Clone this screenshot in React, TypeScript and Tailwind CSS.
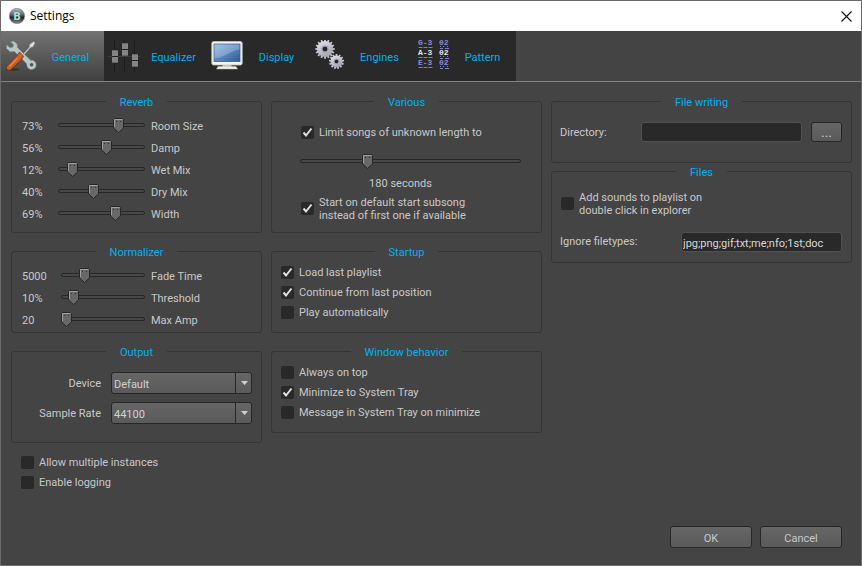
import React, { useId, useState } from 'react';

const ToolsIcon = () => (
  <svg viewBox="0 0 32 32" className="size-8 shrink-0">
    <defs>
      <linearGradient id="handle" x1="0" y1="0" x2="1" y2="1">
        <stop offset="0.2" stopColor="#8c3c10" />
        <stop offset="0.5" stopColor="#d0682a" />
        <stop offset="0.9" stopColor="#7a300a" />
      </linearGradient>
    </defs>
    <ellipse cx="8" cy="29.5" rx="7" ry="1.5" fill="#222" opacity="0.5" />
    <path d="M17 15.500L24.500 7l.2-2.500 4-3 1.300 1.500-2 3.700-2.500.9-7.500 8.500z" fill="#d9e2e2" stroke="#8d9999" strokeWidth="0.6" />
    <path
      d="M5.500 1.800l3.200-.6 3.300 2.600.6 4 13 12.400c3-.4 5.600 1.700 5.600 4.600 0 2.700-2 4.700-4.600 4.700-3 0-5.200-2.600-4.700-5.500L9.500 11.500l-4.300.3L1.500 8.500l.1-3.500 3.600 2.700 2.700-.7.600-2.400z"
      fill="#b9c6c6"
      stroke="#7f8b8b"
      strokeWidth="0.7"
    />
    <circle cx="26.600" cy="24.800" r="2.200" fill="#555" stroke="#e4eaea" strokeWidth="0.600" />
    <path d="M14.500 12l4.200 4.200-2.200 3.600L6 29.500c-1.300 1.200-2.600 1-3.700 0-1.100-1-1.200-2.500-.1-3.700L12 15.500z" fill="url(#handle)" stroke="#6a2a08" strokeWidth="0.6" />
    <path d="M12.500 18L4.500 26.500" stroke="#f0a070" strokeWidth="0.9" />
  </svg>
);

const EqualizerIcon = () => (
  <svg viewBox="0 0 32 32" className="size-8 shrink-0" shapeRendering="crispEdges">
    <path d="M6.500 0v32M16.500 0v32M26.500 0v32" stroke="#1c1c1c" strokeWidth="1" />
    <path d="M0 16.500h32" stroke="#3c3c3c" strokeWidth="1" />
    {[[4, 10], [14, 3], [24, 14]].map(([x, y]) => (
      <g key={x}>
        <rect x={x} y={y} width="6" height="13" fill="#858585" />
        <rect x={x} y={y} width="6" height="1" fill="#6a6a6a" />
        <rect x={x} y={y + 6} width="6" height="1" fill="#222" />
        <rect x={x} y={y + 12} width="6" height="1" fill="#666" />
      </g>
    ))}
  </svg>
);

const DisplayIcon = () => (
  <svg viewBox="0 0 32 32" className="size-8 shrink-0">
    <defs>
      <linearGradient id="screen" x1="0" y1="0" x2="1" y2="1">
        <stop offset="0" stopColor="#8db4e0" />
        <stop offset="1" stopColor="#2b5a9b" />
      </linearGradient>
    </defs>
    <path d="M12 24h8l1 3.500H11z" fill="#c8c8c4" />
    <path d="M7 26.500h18l1.500 2.500h-21z" fill="#f1f1ee" stroke="#b8b8b4" strokeWidth="0.500" />
    <rect x="0.800" y="1.500" width="30.400" height="23.500" rx="1.800" fill="#f4f4f0" stroke="#c4c4be" strokeWidth="0.800" />
    <rect x="3" y="4" width="26" height="17.500" fill="url(#screen)" stroke="#31598f" strokeWidth="0.700" />
    <path d="M3.500 4.500h25v5C19 11 13 18 3.500 18z" fill="#fff" opacity="0.220" />
  </svg>
);

type GearProps = { cx: number; cy: number; r: number; teeth: number };

const Gear = ({ cx, cy, r, teeth }: GearProps) => (
  <g transform={`translate(${cx} ${cy})`}>
    {Array.from({ length: teeth }, (_, i) => (
      <rect key={i} x="-0.900" y={-r} width="1.800" height="3" fill="#c6c6d2" transform={`rotate(${(360 / teeth) * i})`} />
    ))}
    <circle r={r - 1.6} fill="url(#metal)" />
    <circle r={r * 0.360} fill="#9a9aa8" />
    <circle r={r * 0.240} fill="#222" />
  </g>
);

const EnginesIcon = () => (
  <svg viewBox="0 0 32 32" className="size-8 shrink-0">
    <defs>
      <linearGradient id="metal" x1="0" y1="0" x2="0.500" y2="1">
        <stop offset="0" stopColor="#e6e6f0" />
        <stop offset="1" stopColor="#a4a4b4" />
      </linearGradient>
    </defs>
    <Gear cx={11} cy={9} r={9.700} teeth={16} />
    <Gear cx={22.500} cy={21.500} r={7.500} teeth={13} />
  </svg>
);

const patternNotes = ['G-3', 'A-3', 'E-3'];

const PatternIcon = () => (
  <svg viewBox="0 0 32 32" className="size-8 shrink-0 overflow-visible">
    <g fontFamily="'Liberation Mono', monospace" fontSize="8" fontWeight="bold">
      {patternNotes.map((note, i) => (
        <g key={note} fill={i === 1 ? '#e8e8e8' : '#8c88d8'}>
          <text x="1" y={5 + i * 10}>{note}</text>
          <text x="22" y={5 + i * 10}>02</text>
          <path d={`M1.500 ${7.500 + i * 10}h4m1 0h4m1 0h4M23 ${6.500 + i * 10}h1m2 0h1m3 0h1M23 ${8.500 + i * 10}h3m2 0h4`} stroke="#7f7bc4" />
        </g>
      ))}
    </g>
  </svg>
);

const AppIcon = () => (
  <svg viewBox="0 0 16 16" className="size-4">
    <defs>
      <linearGradient id="badge" x1="0" y1="0" x2="0" y2="1">
        <stop offset="0" stopColor="#b5b5b5" />
        <stop offset="0.450" stopColor="#5d5d5d" />
        <stop offset="0.600" stopColor="#242424" />
        <stop offset="1" stopColor="#909090" />
      </linearGradient>
    </defs>
    <circle cx="8" cy="8" r="7.700" fill="url(#badge)" stroke="#777" strokeWidth="0.500" />
    <text x="8" y="11.500" textAnchor="middle" fontSize="10" fontWeight="bold" fontFamily="'DejaVu Sans', sans-serif" fill="#9fe0d6">
      B
    </text>
  </svg>
);

const tabs = [
  { name: 'General', icon: ToolsIcon },
  { name: 'Equalizer', icon: EqualizerIcon },
  { name: 'Display', icon: DisplayIcon },
  { name: 'Engines', icon: EnginesIcon },
  { name: 'Pattern', icon: PatternIcon },
];

type GroupProps = { title: string; className: string; children: React.ReactNode };

const Group = ({ title, className, children }: GroupProps) => (
  <fieldset className="min-w-0 rounded-[3px] border border-[#353535]">
    <legend className="mx-auto px-[14px] pt-0.5 leading-[13px] text-[#00b0f0]">{title}</legend>
    <div className={className}>{children}</div>
  </fieldset>
);

type CheckProps = { label: React.ReactNode; defaultChecked?: boolean };

const Check = ({ label, defaultChecked }: CheckProps) => (
  <label className="flex items-center gap-[5px]">
    <span className="grid shrink-0">
      <input
        type="checkbox"
        defaultChecked={defaultChecked}
        className="peer col-start-1 row-start-1 size-[13px] appearance-none rounded-[2px] bg-[#292929]"
      />
      <svg viewBox="0 0 13 13" className="pointer-events-none col-start-1 row-start-1 hidden size-[13px] peer-checked:block">
        <path d="M2.500 6.500l2.500 3 5.500-7" fill="none" stroke="#e0e0e0" strokeWidth="2" />
      </svg>
    </span>
    <span className="pt-0.5">{label}</span>
  </label>
);

type SliderProps = {
  id: string;
  value: number;
  onChange: (value: number) => void;
  min?: number;
  max?: number;
  label?: string;
};

const Slider = ({ id, value, onChange, min = 0, max = 100, label }: SliderProps) => {
  const ratio = (value - min) / (max - min);

  return (
    <div className="relative flex h-4 min-w-0 flex-1 items-center pb-0.5">
      <div className="h-1 w-full rounded-full border border-[#272727] bg-[#484848]"></div>
      <input
        id={id}
        type="range"
        min={min}
        max={max}
        value={value}
        aria-label={label}
        onChange={(e) => onChange(Number(e.target.value))}
        className="absolute inset-0 w-full opacity-0"
      />
      <svg
        viewBox="0 0 11 15"
        className="pointer-events-none absolute top-0 h-[15px] w-[11px]"
        style={{ left: `calc((100% - 11px) * ${ratio})` }}
      >
        <path d="M1.500 .5h8l1 1V10L5.500 14.500.5 10V1.500z" fill="#686868" stroke="#272727" />
        <path d="M1.500 9V1.500h8" fill="none" stroke="#a0a0a0" />
        <path d="M3 3.500h1M7 3.500h1" stroke="#333" />
      </svg>
    </div>
  );
};

type SliderRowProps = { name: string; initial: number; unit?: string; min?: number; max?: number; wide?: boolean };

const SliderRow = ({ name, initial, unit = '', min, max, wide }: SliderRowProps) => {
  const [value, setValue] = useState(initial);
  const id = useId();

  return (
    <div className="flex h-[22px] items-center">
      <output htmlFor={id} className={wide ? 'w-[39px] pt-0.5' : 'w-9 pt-0.5'}>
        {value}
        {unit}
      </output>
      <Slider id={id} value={value} onChange={setValue} min={min} max={max} />
      <label htmlFor={id} className="w-[116px] pt-0.5 pl-[6px]">
        {name}
      </label>
    </div>
  );
};

type ComboProps = { label: string; options: string[] };

const Combo = ({ label, options }: ComboProps) => {
  const id = useId();

  return (
    <div className="flex items-center gap-[10px]">
      <label htmlFor={id} className="flex-1 pt-0.5 text-right">
        {label}
      </label>
      <div className="grid w-[141px]">
        <select
          id={id}
          className="col-start-1 row-start-1 h-[22px] appearance-none rounded-[3px] border border-[#272727] bg-linear-to-b from-[#666] to-[#5a5a5a] pt-[3px] pl-[2px] text-[#d0d0d0]"
        >
          {options.map((option) => (
            <option key={option}>{option}</option>
          ))}
        </select>
        <span className="pointer-events-none col-start-1 row-start-1 my-px flex w-[17px] items-center justify-center justify-self-end border-l border-[#272727]">
          <svg viewBox="0 0 7 4" className="h-1 w-[7px]">
            <path d="M0 0h7L3.500 4z" fill="#d0d0d0" />
          </svg>
        </span>
      </div>
    </div>
  );
};

const buttonStyle = 'rounded-[3px] border border-[#272727] bg-linear-to-b from-[#666] to-[#5a5a5a] text-[#c8c8c8]';
const fieldStyle = 'h-5 w-[161px] rounded-[3px] border border-[#505050] bg-[#292929] px-px pt-0.5 text-[#d8d8d8]';

const App = () => {
  const [active, setActive] = useState('General');
  const [seconds, setSeconds] = useState(180);

  return (
    <div className="flex min-h-screen flex-col border border-[#6a6a6a] bg-[#444] font-['Roboto',sans-serif] text-[11px] leading-[14px] text-[#c8c8c8]">
      <header className="flex h-[30px] items-center bg-white pr-[9px] pl-2 text-black">
        <AppIcon />
        <h1 className="flex-1 pl-[5px] font-['Open_Sans',sans-serif] text-xs">Settings</h1>
        <button aria-label="Close">
          <svg viewBox="0 0 11 11" className="size-[11px]">
            <path d="M.5 .5l10 10M10.500 .5l-10 10" stroke="#111" strokeWidth="1.100" />
          </svg>
        </button>
      </header>

      {/* Section tabs */}
      <nav role="tablist" className="flex border-b border-[#828282]">
        {tabs.map(({ name, icon: Icon }) => (
          <button
            key={name}
            role="tab"
            aria-selected={name === active}
            onClick={() => setActive(name)}
            className={`flex h-[50px] w-[103px] items-center pl-1 text-[#00b0f0] ${
              name === active ? 'bg-linear-to-b from-[#747474] to-[#404040]' : 'bg-[#292929]'
            }`}
          >
            <Icon />
            <span className="flex-1 pt-1 text-center">{name}</span>
          </button>
        ))}
      </nav>

      <main className="grid grid-cols-[251fr_271fr_301fr] gap-[9px] pt-3 pr-[9px] pl-[10px]">
        <div className="flex flex-col gap-[11px]">
          <Group title="Reverb" className="pt-[6px] pb-[7px] pl-[10px]">
            <SliderRow name="Room Size" initial={73} unit="%" />
            <SliderRow name="Damp" initial={56} unit="%" />
            <SliderRow name="Wet Mix" initial={12} unit="%" />
            <SliderRow name="Dry Mix" initial={40} unit="%" />
            <SliderRow name="Width" initial={69} unit="%" />
          </Group>

          <Group title="Normalizer" className="pt-[6px] pb-px pl-[10px]">
            <SliderRow name="Fade Time" initial={5000} max={20000} wide />
            <SliderRow name="Threshold" initial={10} unit="%" wide />
            <SliderRow name="Max Amp" initial={20} min={20} max={200} wide />
          </Group>

          <Group title="Output" className="pt-[13px] pr-[9px] pb-[18px]">
            <div className="flex flex-col gap-2">
              <Combo label="Device" options={['Default']} />
              <Combo label="Sample Rate" options={['44100', '48000']} />
            </div>
          </Group>

          <div className="flex flex-col gap-1 pl-[10px]">
            <Check label="Allow multiple instances" />
            <Check label="Enable logging" />
          </div>
        </div>

        <div className="flex flex-col gap-[11px]">
          <Group title="Various" className="pt-[15px] pr-5 pb-[10px] pl-7">
            <div className="pl-px">
              <Check label="Limit songs of unknown length to" defaultChecked />
            </div>
            <div className="flex pt-[14px] pb-[5px]">
              <Slider id="song-limit" label="Song length limit" value={seconds} onChange={setSeconds} min={5} max={600} />
            </div>
            <output htmlFor="song-limit" className="block pt-0.5 pr-5 pb-[3px] text-center">
              {seconds} seconds
            </output>
            <div className="pl-px leading-[13px]">
              <Check
                defaultChecked
                label={
                  <>
                    Start on default start subsong
                    <br />
                    instead of first one if available
                  </>
                }
              />
            </div>
          </Group>

          <Group title="Startup" className="pt-[5px] pb-3 pl-[9px]">
            <div className="flex flex-col gap-1">
              <Check label="Load last playlist" defaultChecked />
              <Check label="Continue from last position" defaultChecked />
              <Check label="Play automatically" />
            </div>
          </Group>

          <Group title="Window behavior" className="pt-[5px] pb-3 pl-[9px]">
            <div className="flex flex-col gap-1">
              <Check label="Always on top" />
              <Check label="Minimize to System Tray" defaultChecked />
              <Check label="Message in System Tray on minimize" />
            </div>
          </Group>
        </div>

        <div className="flex flex-col gap-px">
          <Group title="File writing" className="pt-[13px] pr-[9px] pb-5 pl-2">
            <div className="flex items-center gap-[9px]">
              <label htmlFor="directory" className="flex-1 pt-0.5">
                Directory:
              </label>
              <input id="directory" type="text" className={fieldStyle} />
              <button className={`h-5 w-[31px] text-sm leading-[14px] ${buttonStyle}`}>...</button>
            </div>
          </Group>

          <Group title="Files" className="pt-[10px] pr-[9px] pb-[10px] pl-2">
            <div className="pb-[15px] pl-px leading-[13px]">
              <Check
                label={
                  <>
                    Add sounds to playlist on
                    <br />
                    double click in explorer
                  </>
                }
              />
            </div>
            <div className="flex items-center">
              <label htmlFor="ignore" className="flex-1">
                Ignore filetypes:
              </label>
              <input id="ignore" type="text" defaultValue="jpg;png;gif;txt;me;nfo;1st;doc" className={fieldStyle} />
            </div>
          </Group>
        </div>
      </main>

      <footer className="mt-auto flex justify-end gap-2 pt-4 pr-[19px] pb-[17px]">
        <button className={`h-[22px] w-[82px] pt-[3px] ${buttonStyle}`}>OK</button>
        <button className={`h-[22px] w-[82px] pt-[3px] ${buttonStyle}`}>Cancel</button>
      </footer>
    </div>
  );
};

export default App;
